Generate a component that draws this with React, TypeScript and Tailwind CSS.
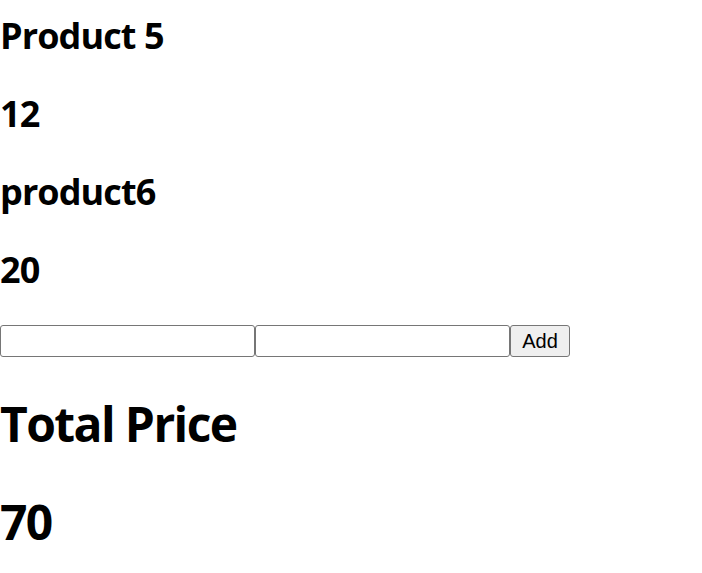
import React from "react";

export default function App() {
  const h2 = "text-[36px] leading-[48px] font-bold tracking-[-0.9px] text-black [font-family:'Open_Sans','Noto_Sans',sans-serif]";
  const h1 = "text-[48px] leading-[64px] font-bold tracking-[-1.6px] text-black [font-family:'Open_Sans','Noto_Sans',sans-serif]";
  return (
    <div className="w-[702px] h-[573px] bg-white overflow-hidden">
      <div className="flex flex-col pt-[12px]">
        <h2 className={h2}>Product 5</h2>
        <h2 className={`${h2} mt-[30px]`}>12</h2>
        <h2 className={`${h2} mt-[30px]`}>product6</h2>
        <h2 className={`${h2} mt-[30px]`}>20</h2>
        <div className="flex mt-[31px]">
          <input className="w-[255px] h-[32px] border border-[#767676] rounded-[3px] bg-white" />
          <input className="w-[255px] h-[32px] border border-[#767676] rounded-[3px] bg-white" />
          <button className="w-[60px] h-[32px] border border-[#767676] rounded-[3px] bg-[#efefef] text-[20px] text-black [font-family:'Liberation_Sans',Arial,sans-serif]">
            Add
          </button>
        </div>
        <h1 className={`${h1} mt-[35px]`}>Total Price</h1>
        <h1 className={`${h1} mt-[34px]`}>70</h1>
      </div>
    </div>
  );
}
